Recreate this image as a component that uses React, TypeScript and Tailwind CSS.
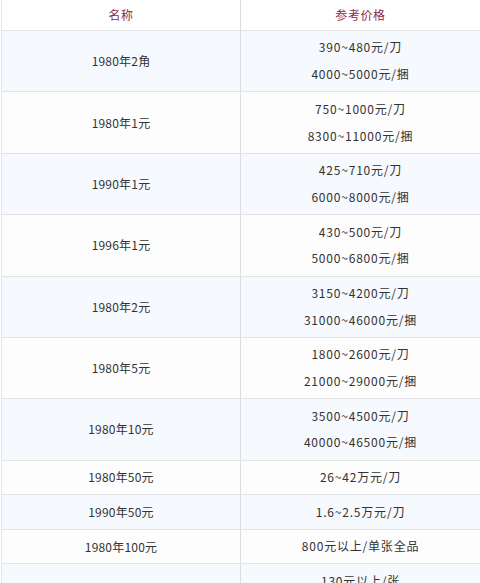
import React from "react";

const rows: { name: string; prices: string[] }[] = [
  { name: "1980年2角", prices: ["390~480元/刀", "4000~5000元/捆"] },
  { name: "1980年1元", prices: ["750~1000元/刀", "8300~11000元/捆"] },
  { name: "1990年1元", prices: ["425~710元/刀", "6000~8000元/捆"] },
  { name: "1996年1元", prices: ["430~500元/刀", "5000~6800元/捆"] },
  { name: "1980年2元", prices: ["3150~4200元/刀", "31000~46000元/捆"] },
  { name: "1980年5元", prices: ["1800~2600元/刀", "21000~29000元/捆"] },
  { name: "1980年10元", prices: ["3500~4500元/刀", "40000~46500元/捆"] },
  { name: "1980年50元", prices: ["26~42万元/刀"] },
  { name: "1990年50元", prices: ["1.6~2.5万元/刀"] },
  { name: "1980年100元", prices: ["800元以上/单张全品"] },
  { name: "1990年100元", prices: ["130元以上/张", "1500元以上/刀"] },
];

export default function App() {
  return (
    <div
      className="w-[480px] h-[583px] overflow-hidden bg-white"
      style={{ fontFamily: '"Noto Sans CJK SC", "Noto Sans", sans-serif' }}
    >
      <div className="border-l border-[#e6e6e6] ml-[1px]">
        <div className="grid grid-cols-[239px_1fr] h-[31px] border-b border-[#e3e3e3] bg-white text-[12px] tracking-[0.6px] text-[#8e2a4b]">
          <div className="flex items-center justify-center border-r border-[#dcdcdc]">名称</div>
          <div className="flex items-center justify-center">参考价格</div>
        </div>
        {rows.map((r, i) => (
          <div
            key={i}
            className={
              "grid grid-cols-[239px_1fr] border-b border-[#e3e3e3] text-[12px] text-[#333] " +
              (i % 2 === 0 ? "bg-[#f6f9fd]" : "bg-[#fdfdfd]")
            }
          >
            <div className="flex items-center justify-center border-r border-[#dcdcdc] tracking-[0.2px]">{r.name}</div>
            <div className="flex flex-col items-center py-[3.4px] leading-[26.8px] tracking-[0.8px]">
              {r.prices.map((p, j) => (
                <div key={j}>{p}</div>
              ))}
            </div>
          </div>
        ))}
      </div>
    </div>
  );
}
